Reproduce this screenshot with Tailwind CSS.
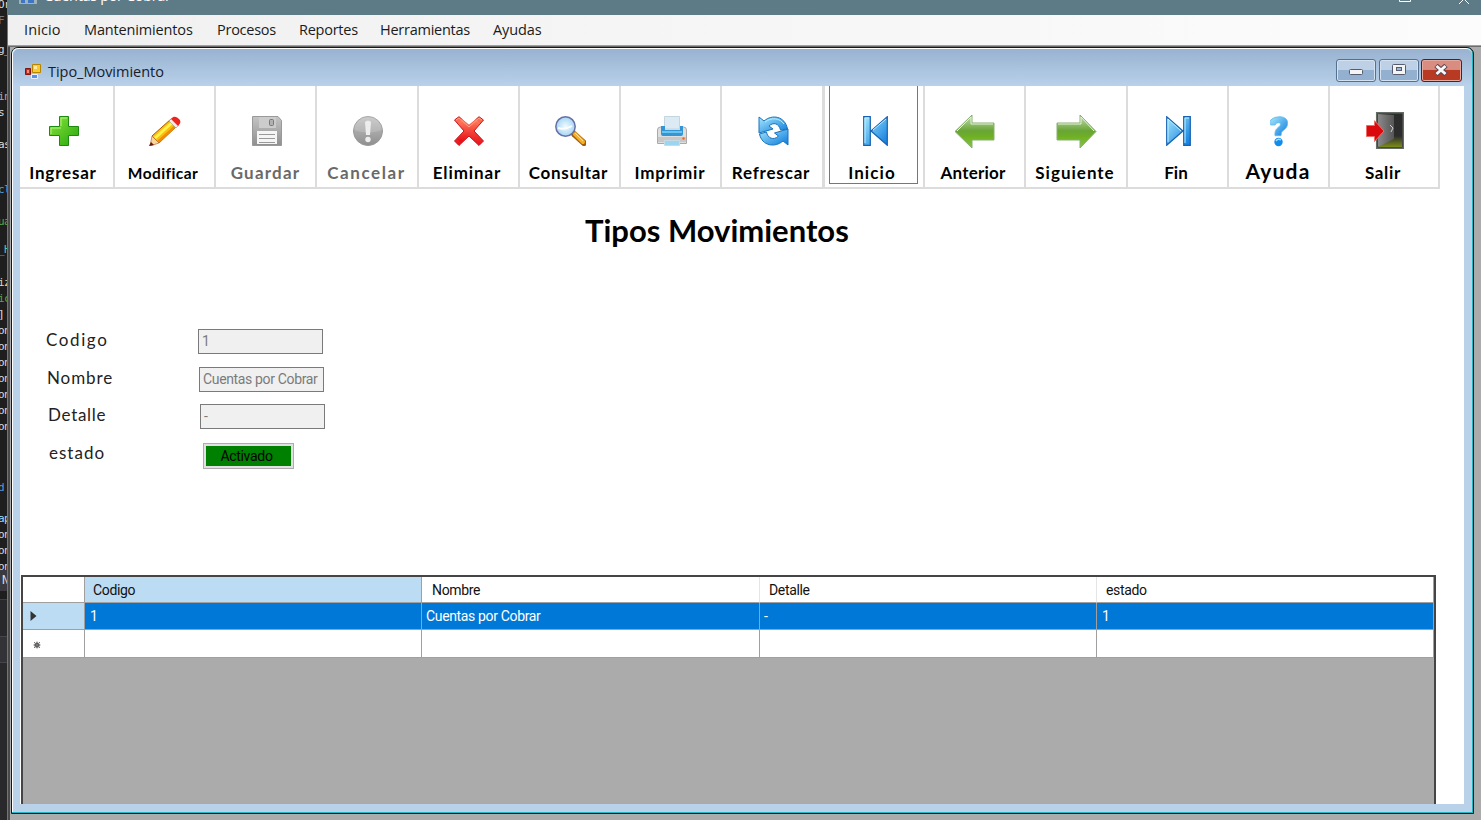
<!DOCTYPE html>
<html lang="es">
<head>
<meta charset="utf-8">
<title>Cuentas por Cobrar</title>
<script src="https://cdn.jsdelivr.net/npm/@tailwindcss/browser@4"></script>
</head>
<body class="w-[1481px] h-[820px] overflow-hidden flex bg-[#1e1e1e]">
<svg width="0" height="0" class="absolute">
  <defs>
    <linearGradient id="plus" x2="1" y2="1"><stop stop-color="#8be63c"/><stop offset="1" stop-color="#25a50c"/></linearGradient>
    <linearGradient id="gray" x2="0" y2="1"><stop stop-color="#c4c4c4"/><stop offset="1" stop-color="#8f8f8f"/></linearGradient>
    <linearGradient id="red" x2="0" y2="1"><stop stop-color="#ff7a5c"/><stop offset="1" stop-color="#e80f18"/></linearGradient>
    <linearGradient id="blue" x2="1" y2="1"><stop stop-color="#a5e8fd"/><stop offset="1" stop-color="#0a79dc"/></linearGradient>
    <linearGradient id="arrow" x2="0" y2="1"><stop stop-color="#c5dfb1"/><stop offset=".48" stop-color="#68a436"/><stop offset=".65" stop-color="#6fb023"/><stop offset="1" stop-color="#83c54a"/></linearGradient>
    <linearGradient id="door" x2="1" y2="0"><stop stop-color="#8a8a8a"/><stop offset="1" stop-color="#555"/></linearGradient>
    <linearGradient id="floor" x2="0" y2="1"><stop stop-color="#2c2c2c"/><stop offset="1" stop-color="#7c8c18"/></linearGradient>
    <radialGradient id="lens"><stop stop-color="#f2fbff"/><stop offset="1" stop-color="#a5d6f4"/></radialGradient>
  </defs>
</svg>

<!-- editor edge behind the application -->
<aside class="w-[7px] shrink-0 h-full overflow-hidden flex flex-col bg-[#1e1e1e] font-['DejaVu_Sans_Mono',monospace] text-[11px] leading-[16px] text-[#dcdcdc]">
  <div class="h-[570px] overflow-hidden whitespace-nowrap -ml-[2px] tracking-[-0.5px]">
    <div class="-mt-[3px] h-4">Or</div>
    <div class="h-4 text-[#777]">F</div>
    <div class="mt-[13px] h-4">g_</div>
    <div class="mt-[31px] h-4 text-[#aaa]">in</div>
    <div class="h-4">s</div>
    <div class="mt-4 h-4">as</div>
    <div class="mt-[29px] h-4 text-[#569cd6]">cl</div>
    <div class="mt-4 h-4 text-[#57a64a]">ua</div>
    <div class="mt-3 h-4 text-[#4ec9b0]">_H</div>
    <div class="mt-[17px] h-4 text-[#dcdcaa]">iz</div>
    <div class="h-4 text-[#57a64a]">ic</div>
    <div class="h-4">]</div>
    <div class="h-4">on</div><div class="h-4">on</div><div class="h-4">on</div><div class="h-4">on</div><div class="h-4">on</div><div class="h-4">on</div><div class="h-4">on</div>
    <div class="mt-[45px] h-4 text-[#569cd6]">d</div>
    <div class="mt-[15px] h-4 text-[#9cdcfe]">ap</div>
    <div class="h-4">on</div><div class="h-4">on</div><div class="h-4">on</div>
  </div>
  <div class="h-[21px] bg-[#3a3a40] pl-[2px] pt-[2px] text-[12px]">N</div>
  <div class="h-[37px] bg-[#29292c] border-t border-[#3f3f46] mt-2"></div>
  <div class="h-[27px] bg-[#333337] border-y border-[#46464a]"></div>
  <div class="flex-1 bg-[#29292b]"></div>
</aside>

<div class="flex-1 min-w-0 flex flex-col border-l border-[#6d777c] bg-[#ababab]">
  <header class="h-[15px] shrink-0 bg-[#5d7a87] overflow-hidden">
    <div class="relative w-full h-full">
      <svg class="absolute left-[11px] top-0" width="18" height="4"><path d="M0 0h18v4H0z" fill="#9eb1bd"/><path d="M2 0h4v3H2zM9 0h6v3H9z" fill="#3f76c4"/></svg>
      <span class="absolute left-[36px] top-[-14px] leading-5 text-[14.5px] tracking-[-0.35px] text-white font-['Open_Sans',sans-serif]">Cuentas por Cobrar</span>
      <svg class="absolute right-0 top-0" width="90" height="4"><path d="M8.500 0V1.500H19.500V0M68 4l5-5M73-1l5 5" fill="none" stroke="#fff"/></svg>
    </div>
  </header>
  <nav class="h-[30px] shrink-0 bg-linear-to-r from-[#f0f0f0] to-[#fcfcfc] flex items-center pl-4 gap-6 text-[14.5px] text-[#1b1b1b] font-['Open_Sans',sans-serif] whitespace-nowrap">
    <span class="w-9 tracking-[0.1px]">Inicio</span>
    <span class="w-[109px] tracking-[-0.15px]">Mantenimientos</span>
    <span class="w-[58px] tracking-[-0.25px]">Procesos</span>
    <span class="w-[57px] tracking-[-0.25px]">Reportes</span>
    <span class="w-[89px] tracking-[-0.25px]">Herramientas</span>
    <span class="tracking-[-0.1px]">Ayudas</span>
  </nav>
  <div class="h-[2px] shrink-0 bg-[#6b6b6b] border-t border-[#a0a0a0]"></div>

  <div class="flex-1 min-h-0 pl-[1px] border-l-2 border-[#4a4a4a]">
    <section class="w-[1463px] h-[767px] rounded-t-[7px] border border-[#10181c] bg-[#22b6c4] pr-[1px] pb-[1px]">
    <div class="h-full rounded-t-[6px] border-l border-t border-white bg-[#bad1ea] pl-[7px] pr-[8px] pb-[8px] flex flex-col">
      <div class="h-[37px] shrink-0 -ml-[7px] -mr-[8px] pl-3 pr-[10px] rounded-t-[6px] bg-linear-to-b from-[#98b2d0] to-[#b9d1ea] flex items-center">
        <svg class="mt-[7px]" width="16" height="16" viewBox="0 0 16 16"><path d="M7.500 1.500h8v8h-8z" fill="#fbc92d" stroke="#b88500"/><path d="M9 3h3v3H9z" fill="#ffeb9a"/><path d="M.5 5.500h5v6h-5z" fill="#c22c22" stroke="#7f1510"/><path d="M2 7h2v3H2z" fill="#f08b75"/><path d="M6.500 11.500h6v4h-6z" fill="#5a8fee" stroke="#e8efff"/></svg>
        <h1 class="ml-[7px] mt-2 text-[14.5px] tracking-[-0.03px] leading-5 text-[#16202b] font-['Open_Sans',sans-serif]">Tipo_Movimiento</h1>
        <div class="ml-auto mt-[5px] flex gap-[2px]">
          <span class="w-[40px] h-[23px] rounded-[3px] border border-[#56708f] bg-linear-to-b from-[#bdd0e6] from-50% to-[#93b0d0] to-50% shadow-[inset_0_0_0_1px_#d3e1f0]"><svg width="38" height="21"><rect x="12.500" y="9.500" width="13" height="5" rx="1" fill="#f4f4f4" stroke="#565b6d"/></svg></span>
          <span class="ml-[1px] w-[40px] h-[23px] rounded-[3px] border border-[#56708f] bg-linear-to-b from-[#bdd0e6] from-50% to-[#93b0d0] to-50% shadow-[inset_0_0_0_1px_#d3e1f0]"><svg width="38" height="21"><rect x="12.500" y="4.500" width="13" height="10" rx="1" fill="#f4f4f4" stroke="#565b6d"/><rect x="16.500" y="7.500" width="5" height="3" fill="#9db8d6" stroke="#565b6d"/></svg></span>
          <span class="w-[41px] h-[23px] rounded-[3px] border border-[#5f1a22] bg-linear-to-b from-[#d98c80] from-45% to-[#b93a22] to-50% shadow-[inset_0_0_0_1px_#e5a99f]"><svg width="38" height="21"><path d="M14 5.500l10 9M24 5.500l-10 9" stroke="#5b4650" stroke-width="5"/><path d="M14.500 6l9 8M23.500 6l-9 8" stroke="#f8f8f8" stroke-width="3"/></svg></span>
        </div>
      </div>

      <main class="flex-1 min-h-0 bg-white overflow-hidden flex flex-col">
        <div class="grid grid-cols-[95px_101px_101px_102px_101px_101px_101px_102px_101px_101px_102px_101px_101px_110px] h-[103px] shrink-0 w-[1420px] text-center text-[17px] leading-5 font-bold text-black font-['Lato',sans-serif] *:border-r-2 *:border-b-2 *:border-[#dcdcdc] *:flex *:flex-col *:items-center *:pt-[30px] *:whitespace-nowrap">
          <div class="pr-[7px]"><svg class="ml-[2px]" width="30" height="30" viewBox="0 0 30 30"><path d="M10.500.5h9v10h10v9h-10v10h-9v-10H.5v-9h10z" fill="url(#plus)" stroke="#1d8a10"/><path d="M12 10V2h6M2 18v-6h10" fill="none" stroke="#b5f182"/></svg><span class="mt-[17px] tracking-[0.8px]">Ingresar</span></div>
          <div class="pr-[3px]"><svg class="ml-[4px]" width="32" height="30" viewBox="0 0 32 30"><path d="M3 20L22 3l7 6L10 27z" fill="#fdbf0a" stroke="#a85b00"/><path d="M5 21L24 4l2 2L7 23z" fill="#fff34c"/><path d="M8 25L27 8l2 1L10 27z" fill="#f08d05"/><path d="M3 20l7 7-9 3z" fill="#f9d69b" stroke="#b76d25" stroke-width=".7"/><path d="M2 26l3 3-5 1z" fill="#651b18"/><path d="M20 5l3-3 7 7-3 3z" fill="#eee" stroke="#888" stroke-width=".5"/><path d="M22 3c3-4 6-2 8 0s2 4-1 7z" fill="#ee241d"/></svg><span class="mt-[17px] text-[15.500px] tracking-[0.4px]">Modificar</span></div>
          <div><svg class="ml-[3px]" width="30" height="30" viewBox="0 0 30 30"><path d="M.5.5H26l3.500 4v25H.5z" fill="url(#gray)" stroke="#999"/><path d="M7 1h17v11H7z" fill="#ccc"/><rect x="17.500" y="3.500" width="4" height="6" rx="1" fill="#b1b1b1" stroke="#777"/><path d="M5 15h20v13H5z" fill="#f5f5f5"/><path d="M7 18.500h16M7 22.500h16M7 26.500h16" stroke="#999"/></svg><span class="mt-[17px] text-[#696969] tracking-[1.2px]">Guardar</span></div>
          <div class="pr-px"><svg class="ml-[3px]" width="30" height="30" viewBox="0 0 30 30"><circle cx="15" cy="15" r="14.500" fill="url(#gray)" stroke="#999"/><path d="M1 14a14 14 0 0128 0Q15 19 1 14" fill="#fff" opacity=".15"/><path d="M12 6q3-3 6 0l-1 13h-4z" fill="#ededed"/><circle cx="15" cy="23.500" r="2.700" fill="#ededed"/></svg><span class="mt-[17px] text-[#696969] tracking-[1.6px]">Cancelar</span></div>
          <div class="pr-[3px]"><svg class="ml-[3px]" width="30" height="30" viewBox="0 0 30 30"><path d="M5 .7L15 9.500 25 .7 29.500 4 20 15l9.500 10-4.500 4.500L15 20 5 29.500.5 25 10 15 .5 4z" fill="url(#red)" stroke="#c3171b"/><path d="M6 5l9 8.500L24 5M5 25l9-9" fill="none" stroke="url(#red)" stroke-width="6"/><path d="M2 4l3-2 10 9L25 2l3 2" fill="none" stroke="#ff9c81"/></svg><span class="mt-[17px] tracking-[0.9px]">Eliminar</span></div>
          <div class="pr-[2px]"><svg class="ml-[4px]" width="31" height="30" viewBox="0 0 31 30"><path d="M19 18l10 9" stroke="#9c5b10" stroke-width="6" stroke-linecap="round"/><path d="M20 18l8 8" stroke="#fcaf1d" stroke-width="4" stroke-linecap="round"/><path d="M20 17l8 8" stroke="#ffe28a"/><circle cx="10.500" cy="10.500" r="9.700" fill="url(#lens)" stroke="#6671a8" stroke-width="1.500"/><path d="M3 12q7 2 14-2" fill="none" stroke="#fff" stroke-width="2"/></svg><span class="mt-[17px] tracking-[0.7px]">Consultar</span></div>
          <div class="pr-px"><svg class="ml-[3px]" width="30" height="30" viewBox="0 0 30 30"><path d="M.5 14q0-3 3-3h23q3 0 3 3v13.500H.5z" fill="#dedede" stroke="#aaa"/><path d="M1 21h28v5H1z" fill="#c8c8c8"/><path d="M7.500.5h15V13h-15z" fill="#dcebf3" stroke="#c3d5df"/><path d="M4 10h4v4h15v-4h3v8q0 2-2 2H6q-2 0-2-2z" fill="#3295d5"/><path d="M5 15h20v2H5z" fill="#6ec3ee"/><path d="M7.500 24.500h15v5h-15z" fill="#9bd5ef" stroke="#c5dce7"/><circle cx="26.500" cy="22.500" r="1.200" fill="#f36a22"/></svg><span class="mt-[17px] tracking-[0.8px]">Imprimir</span></div>
          <div class="pr-[2px]"><svg class="ml-[4px]" width="31" height="30" viewBox="0 0 31 30"><path d="M1 1l5 4C14-2 27 0 29.500 13l-7 1C21 7 15 6 11 10l4 3-14 4z" fill="url(#blue)" stroke="#1774bc"/><path d="M30 29l-5-4C17 32 4 30 1.500 18l7-2c1 6 7 9 12 4l-4-3L30 13z" fill="url(#blue)" stroke="#1774bc"/><path d="M7 6c6-5 15-4 19 2" fill="none" stroke="#b9edfe"/></svg><span class="mt-[17px] tracking-[0.8px]">Refrescar</span></div>
          <div class="relative pr-1 border-l-2 -ml-[1px]"><div class="absolute left-[4px] right-[5px] top-[-1px] bottom-[3px] border border-[#777]"></div><svg class="ml-[6px]" width="25" height="30" viewBox="0 0 25 30"><path d="M.7.7h6.600v28.600H.7zM24.300.7v28.600L8 15z" fill="url(#blue)" stroke="#1762b2" stroke-width="1.200"/><path d="M2 27V2h4M10 14L23 3" fill="none" stroke="#bdefff"/></svg><span class="mt-[17px] tracking-[1.1px]">Inicio</span></div>
          <div class="pr-[3px]"><svg class="ml-[3px] -mt-[2px]" width="41" height="35" viewBox="0 0 41 35"><path d="M1 17.500L18 1v8h22v17H18v8z" fill="url(#arrow)" stroke="#89af70"/><path d="M3 17L17 3v7h22" fill="none" stroke="#e3f0da"/></svg><span class="mt-[14px] tracking-[0.2px]">Anterior</span></div>
          <div class="pr-[2px]"><svg class="ml-[3px] -mt-[2px]" width="41" height="35" viewBox="0 0 41 35"><path d="M40 17.500L24 1v8H1v17h23v8z" fill="url(#arrow)" stroke="#89af70"/><path d="M2 10h23V3l13 14" fill="none" stroke="#e3f0da"/></svg><span class="mt-[14px] tracking-[1px]">Siguiente</span></div>
          <div class="pr-[3px]"><svg class="ml-[5px]" width="25" height="30" viewBox="0 0 25 30"><path d="M17.700.7h6.600v28.600h-6.600zM.7.7L17 15 .7 29.300z" fill="url(#blue)" stroke="#1762b2" stroke-width="1.200"/><path d="M2 26V3l13 12M19 27V2h4" fill="none" stroke="#bdefff"/></svg><span class="mt-[17px]">Fin</span></div>
          <div class="pr-px"><svg class="ml-[1px]" width="18" height="31" viewBox="0 0 18 31"><path d="M.7 9V4Q4 .5 10 .7c10 .5 9.500 10 3 14-2 1.300-1.500 3-2 5H5c-.5-5 1-6.500 4-9 2-1.700 2-4-.5-4Q6 6.500 5 9z" fill="url(#blue)" stroke="#5ab9ef" stroke-width=".8"/><circle cx="8.500" cy="26" r="4.200" fill="#128cec"/><path d="M6 25q2-3 5-1" stroke="#9ce0fe" stroke-width="1.500" fill="none"/></svg><span class="mt-[14px] text-[21px] tracking-[1.2px]">Ayuda</span></div>
          <div class="border-r-[1px] pr-[2px]"><svg class="ml-[4px] -mt-[4px]" width="38" height="38" viewBox="0 0 38 38"><path d="M10.700.7h26.600v35.600H10.700z" fill="#2c2c2c" stroke="#656c65" stroke-width="1.500"/><path d="M12 35l16-11h8v11z" fill="url(#floor)"/><path d="M12 2l16 1v24L12 35z" fill="url(#door)"/><path d="M24 13l3 3-2 4" stroke="#ccc" fill="none"/><path d="M.5 13.500h8V8.700L18 19 8.500 29.500v-5h-8z" fill="#d9090e" stroke="#f06b66"/></svg><span class="mt-[13px] tracking-[0.7px]">Salir</span></div>
        </div>

        <h2 class="mt-[23px] ml-[565px] h-10 shrink-0 leading-[36px] text-[31px] font-bold text-black font-['Lato',sans-serif] whitespace-nowrap">Tipos Movimientos</h2>

        <form class="mt-[77px] h-[246px] shrink-0 pl-[25px] flex flex-col gap-[12.500px] text-[17px] text-[#222] font-['Lato',sans-serif] *:flex *:h-[25px] *:shrink-0">
          <div class="pl-[1px]"><label class="w-[152px] leading-[21px] tracking-[1.6px]">Codigo</label><div class="w-[125px] border border-[#7a7a7a] bg-[#f0f0f0] pl-[3px] text-[14px] leading-[23px] text-[#7b7b7b] font-['Roboto',sans-serif]">1</div></div>
          <div class="pl-[2px]"><label class="w-[152px] leading-[21px] tracking-[0.9px]">Nombre</label><div class="w-[125px] border border-[#7a7a7a] bg-[#f0f0f0] pl-[3px] text-[14px] leading-[23px] text-[#7b7b7b] font-['Roboto',sans-serif] tracking-[-0.35px] whitespace-nowrap">Cuentas por Cobrar</div></div>
          <div class="pl-[3px]"><label class="w-[152px] leading-[21px] tracking-[0.7px]">Detalle</label><div class="w-[125px] border border-[#7a7a7a] bg-[#f0f0f0] pl-[3px] text-[14px] leading-[23px] text-[#7b7b7b] font-['Roboto',sans-serif]">-</div></div>
          <div class="pl-[4px]"><label class="w-[154px] leading-[21px] tracking-[1px]">estado</label><div class="mt-[1px] w-[91px] h-[26px] border border-[#adadad] bg-[#e1e1e1] p-[2px]"><div class="bg-[#008000] h-[20px] text-center text-[14px] leading-[21px] text-black font-['Roboto',sans-serif] tracking-[-0.3px] pr-1">Activado</div></div></div>
        </form>

        <div class="ml-[1px] flex-1 w-[1415px] border-t-2 border-x-2 border-b-0 border-[#454545] bg-[#ababab] font-['Roboto',sans-serif] text-[14px] tracking-[-0.35px] text-[#111]">
          <div class="grid grid-cols-[62px_337px_338px_337px_337px] grid-rows-[26px_27px_28px] leading-[26px] *:border-r *:border-b *:border-[#a0a0a0]">
            <div class="bg-white"></div><div class="bg-[#bcdcf4] pl-2">Codigo</div><div class="bg-white pl-[10px] border-r-[#e5e5e5]!">Nombre</div><div class="bg-white pl-[9px] border-r-[#e5e5e5]!">Detalle</div><div class="bg-white pl-[9px]">estado</div>
            <div class="bg-[#bcdcf4] flex items-center pl-[7px]"><svg width="7" height="12"><path d="M.5 1v10L6.500 6z" fill="#333"/></svg></div><div class="bg-[#0078d7] text-white pl-[5px]">1</div><div class="bg-[#0078d7] text-white pl-1">Cuentas por Cobrar</div><div class="bg-[#0078d7] text-white pl-1">-</div><div class="bg-[#0078d7] text-white pl-[5px]">1</div>
            <div class="bg-white flex items-center pl-[10px]"><svg class="mt-[3px]" width="8" height="8"><circle cx="4" cy="4" r="2.600" fill="#444"/><path d="M4 .5v7M.5 4h7M1 1l6 6M7 1L1 7" stroke="#777"/></svg></div><div class="bg-white"></div><div class="bg-white"></div><div class="bg-white"></div><div class="bg-white"></div>
          </div>
        </div>
      </main>
    </div>
    </section>
  </div>
</div>
</body>
</html>
